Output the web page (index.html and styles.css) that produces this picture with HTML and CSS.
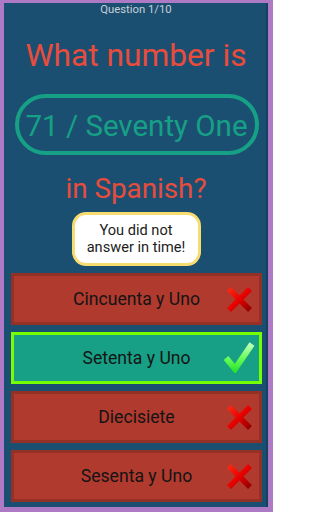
FILE: index.html
```html
<!DOCTYPE html>
<html>
<head>
<meta charset="utf-8">
<link rel="stylesheet" href="styles.css">
</head>
<body>
<div class="frame">
  <div class="header">Question 1/10</div>
  <div class="title title-top">What number is</div>
  <div class="pill">71 / Seventy One</div>
  <div class="title title-bottom">in Spanish?</div>
  <div class="toast">You did not<br>answer in time!</div>
  <div class="answers">
    <div class="answer wrong">
      <span class="label">Cincuenta y Uno</span>
      <svg class="icon" width="27" height="27" viewBox="0 0 27 27"><defs><linearGradient id="xg1" gradientUnits="userSpaceOnUse" x1="0" y1="0" x2="27" y2="27"><stop offset="0" stop-color="#ff3418"/><stop offset="0.5" stop-color="#e60000"/><stop offset="1" stop-color="#7a0000"/></linearGradient></defs><path d="M3 3 L24 24 M24 3 L3 24" stroke="url(#xg1)" stroke-width="5.5" fill="none"/></svg>
    </div>
    <div class="answer right">
      <span class="label">Setenta y Uno</span>
      <svg class="icon check" width="32" height="32" viewBox="0 0 32 32"><defs><linearGradient id="cg" gradientUnits="userSpaceOnUse" x1="0" y1="0" x2="0" y2="32"><stop offset="0" stop-color="#d4ffd0"/><stop offset="0.5" stop-color="#70ff60"/><stop offset="1" stop-color="#22e022"/></linearGradient></defs><path d="M3 17 L12 28 L29 3" stroke="url(#cg)" stroke-width="6" fill="none" stroke-linejoin="miter"/></svg>
    </div>
    <div class="answer wrong">
      <span class="label">Diecisiete</span>
      <svg class="icon" width="27" height="27" viewBox="0 0 27 27"><defs><linearGradient id="xg2" gradientUnits="userSpaceOnUse" x1="0" y1="0" x2="27" y2="27"><stop offset="0" stop-color="#ff3418"/><stop offset="0.5" stop-color="#e60000"/><stop offset="1" stop-color="#7a0000"/></linearGradient></defs><path d="M3 3 L24 24 M24 3 L3 24" stroke="url(#xg2)" stroke-width="5.5" fill="none"/></svg>
    </div>
    <div class="answer wrong">
      <span class="label">Sesenta y Uno</span>
      <svg class="icon" width="27" height="27" viewBox="0 0 27 27"><defs><linearGradient id="xg3" gradientUnits="userSpaceOnUse" x1="0" y1="0" x2="27" y2="27"><stop offset="0" stop-color="#ff3418"/><stop offset="0.5" stop-color="#e60000"/><stop offset="1" stop-color="#7a0000"/></linearGradient></defs><path d="M3 3 L24 24 M24 3 L3 24" stroke="url(#xg3)" stroke-width="5.5" fill="none"/></svg>
    </div>
  </div>
</div>
</body>
</html>
```

FILE: styles.css
```css
* { box-sizing: border-box; }
html, body { margin: 0; padding: 0; }
body {
  width: 273px;
  height: 512px;
  font-family: Roboto, "Noto Sans", sans-serif;
  overflow: hidden;
}
.frame {
  width: 273px;
  height: 512px;
  border-style: solid;
  border-color: #af7ac5;
  border-width: 3px 5px 5px 4px;
  background: #1b4f72;
  box-shadow: inset -2px 0 0 #154060;
  display: flex;
  flex-direction: column;
  align-items: center;
}
.header {
  font-size: 11.3px;
  line-height: 14px;
  height: 14px;
  color: #c9cfd6;
  text-align: center;
}
.title {
  color: #e74c3c;
  line-height: 36px;
  height: 36px;
  text-align: center;
  white-space: nowrap;
}
.title-top { margin-top: 21px; font-size: 31.7px; }
.pill {
  margin-top: 20px;
  width: 244px;
  height: 61px;
  border: 4px solid #16a085;
  border-radius: 31px;
  color: #16a085;
  font-size: 29.5px;
  line-height: 30px;
  padding-top: 3px;
  display: flex;
  align-items: center;
  justify-content: center;
  white-space: nowrap;
  margin-left: 1px;
}
.title-bottom { margin-top: 16px; font-size: 27.8px; }
.toast {
  margin-top: 5px;
  width: 129px;
  height: 54px;
  background: #ffffff;
  border: 3px solid #f7dc6f;
  border-radius: 14px;
  padding: 7px 0;
  font-size: 14.6px;
  line-height: 17px;
  color: #1c1c1c;
  text-align: center;
  white-space: nowrap;
}
.answers {
  margin-top: 7px;
  align-self: stretch;
  padding: 0 6px 0 7px;
  display: flex;
  flex-direction: column;
  gap: 7px;
}
.answer {
  height: 52px;
  border: 3px solid #943126;
  background: #b03a2e;
  display: grid;
  grid-template-columns: 1fr auto 1fr;
  align-items: center;
  padding-right: 6px;
  padding-left: 6px;
}
.answer.right {
  background: #17a085;
  border-color: #76ff03;
}
.label {
  grid-column: 2;
  font-size: 17.6px;
  font-weight: 400;
  color: #141414;
  white-space: nowrap;
}
.icon {
  grid-column: 3;
  justify-self: end;
  display: block;
}
.icon.check { margin-right: -2px; margin-top: -2px; }
```
